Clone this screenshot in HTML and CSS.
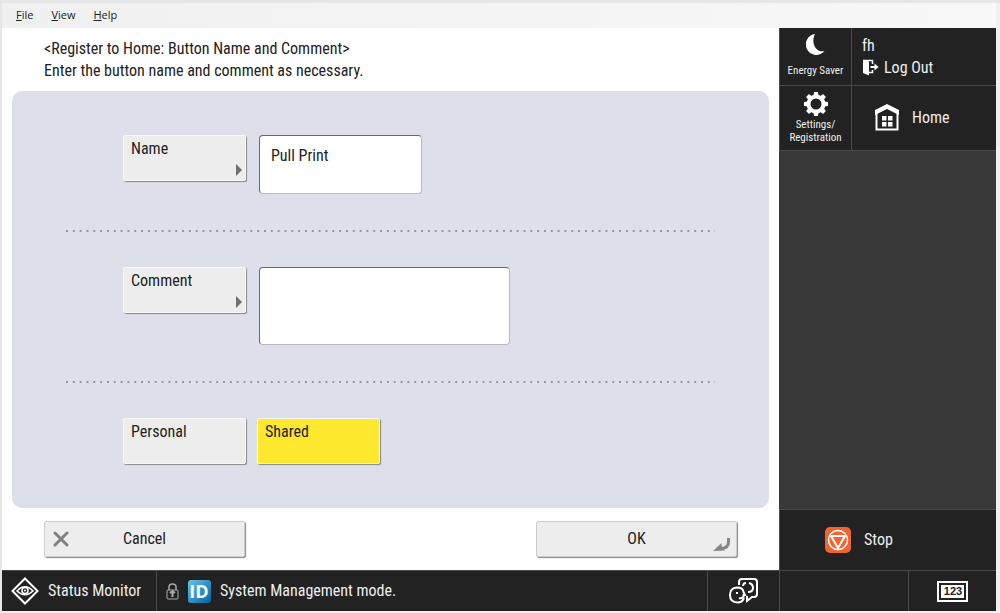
FILE: index.html
```html
<!DOCTYPE html>
<html lang="en">
  <head>
    <meta charset="UTF-8" />
    <meta name="viewport" content="width=device-width, initial-scale=1.0" />
    <title>Register to Home</title>
    <link rel="stylesheet" href="styles.css">
  </head>
  <body>
    <div class="window">
      <nav class="menu-bar">
        <button type="button" class="menu-item"><u>F</u>ile</button>
        <button type="button" class="menu-item"><u>V</u>iew</button>
        <button type="button" class="menu-item"><u>H</u>elp</button>
      </nav>

      <div class="screen">
        <main class="content">
          <header class="heading">
            <h1>&lt;Register to Home: Button Name and Comment&gt;</h1>
            <p>Enter the button name and comment as necessary.</p>
          </header>

          <section class="panel">
            <div class="row">
              <button type="button" class="key opens" id="nameKey">Name</button>
              <input type="text" class="field" aria-labelledby="nameKey" value="Pull Print" />
            </div>
            <div class="row">
              <button type="button" class="key opens" id="commentKey">Comment</button>
              <textarea class="field comment" aria-labelledby="commentKey"></textarea>
            </div>
            <div class="row share">
              <button type="button" class="key" aria-pressed="false">Personal</button>
              <button type="button" class="key selected" aria-pressed="true">Shared</button>
            </div>
          </section>

          <div class="actions">
            <button type="button" class="action">
              <svg class="cancel-icon" width="16" height="16" viewBox="0 0 16 16">
                <path d="M2 2L14 14M14 2L2 14" fill="none" stroke="#808080" stroke-width="3" stroke-linecap="round" />
              </svg>
              Cancel
            </button>
            <button type="button" class="action">
              OK
              <svg class="enter-icon" width="18" height="14" viewBox="0 0 18 14">
                <path d="M15.500 0v4q0 6-7 6.500" fill="none" stroke="#868686" stroke-width="3" />
                <path d="M0 13L8.500 5V8L12 12.500Z" fill="#868686" />
              </svg>
            </button>
          </div>
        </main>

        <aside class="sidebar">
          <div class="shortcuts">
            <button type="button" class="tile small">
              <svg width="20" height="22" viewBox="0 0 20 22">
                <path d="M9 0A10.500 10.500 0 1 0 18.500 17C10 19 4.500 9 9 0Z" fill="#fff" />
              </svg>
              Energy Saver
            </button>
            <div class="tile user">
              <span>fh</span>
              <button type="button" class="log-out">
                <svg width="17" height="17" viewBox="0 0 17 17">
                  <path d="M1 1L7 2.500V16.500L1 14Z" fill="#fff" />
                  <path d="M1 1.500H10.500V5M10.500 11V13.500H7" fill="none" stroke="#fff" stroke-width="1.500" />
                  <path d="M8.500 8H13" stroke="#fff" stroke-width="2" />
                  <path d="M12.500 4.500L16.500 8L12.500 11.500Z" fill="#fff" />
                </svg>
                Log Out
              </button>
            </div>
            <button type="button" class="tile small">
              <svg width="24" height="24" viewBox="-12 -12 24 24">
                <circle r="7.500" fill="none" stroke="#fff" stroke-width="4" />
                <g fill="#fff">
                  <path id="tooth" d="M-2.500-8L-2-12H2L2.500-8Z" />
                  <use href="#tooth" transform="rotate(45)" />
                  <use href="#tooth" transform="rotate(90)" />
                  <use href="#tooth" transform="rotate(135)" />
                  <use href="#tooth" transform="rotate(180)" />
                  <use href="#tooth" transform="rotate(225)" />
                  <use href="#tooth" transform="rotate(270)" />
                  <use href="#tooth" transform="rotate(315)" />
                </g>
              </svg>
              <span>Settings/<br />Registration</span>
            </button>
            <button type="button" class="tile home">
              <svg width="26" height="28" viewBox="0 0 26 28">
                <path d="M2.500 9V25.500H23.500V9" fill="none" stroke="#fff" stroke-width="2" />
                <path d="M1 11V6L13 0L25 6V11L13 5Z" fill="#fff" />
                <path d="M8 12h4.500v4.500H8zM14 12h4.500v4.500H14zM8 18h4.500v4.500H8zM14 18h4.500v4.500H14z" fill="#fff" />
              </svg>
              Home
            </button>
          </div>
          <button type="button" class="stop">
            <svg width="26" height="26" viewBox="0 0 26 26">
              <rect width="26" height="26" rx="5" fill="#f26430" />
              <circle cx="13" cy="13" r="9.500" fill="none" stroke="#fff" stroke-width="1.500" />
              <path d="M6 9H20L13 21Z" fill="none" stroke="#fff" stroke-width="2" stroke-linejoin="round" />
            </svg>
            Stop
          </button>
        </aside>
      </div>

      <footer class="status-bar">
        <button type="button" class="status-monitor">
          <svg width="28" height="28" viewBox="0 0 28 28" fill="none" stroke="#fff">
            <path d="M14 1.500L26.500 14L14 26.500L1.500 14Z" stroke-width="2" />
            <path d="M6 14Q14 5.500 22 14Q14 21.500 6 14Z" stroke-width="1.500" />
            <circle cx="14" cy="13.500" r="3" stroke-width="1.500" />
            <circle cx="14" cy="13.500" r="1" fill="#fff" stroke="none" />
          </svg>
          Status Monitor
        </button>
        <div class="message">
          <svg width="13" height="17" viewBox="0 0 13 17" fill="none" stroke="#aaa">
            <path d="M3 7V4Q3 1 6.500 1T10 4V7" stroke-width="1.500" />
            <rect x="1" y="7" width="11" height="9" rx="1" />
            <path d="M6.500 8.500V14M4 10L6.500 8L9 10" stroke-width="2" />
          </svg>
          <svg class="id-icon" width="23" height="23" viewBox="0 0 23 23">
            <defs>
              <linearGradient id="blue" x1="0" y1="0" x2="1" y2="1">
                <stop offset="0" stop-color="#68c4e4" />
                <stop offset="1" stop-color="#0460a4" />
              </linearGradient>
            </defs>
            <rect width="23" height="23" rx="3" fill="url(#blue)" />
            <text x="11" y="18" class="id-text">ID</text>
          </svg>
          <span>System Management mode.</span>
        </div>
        <button type="button" class="language" aria-label="Language">
          <svg width="30" height="26" viewBox="0 0 30 26" fill="none" stroke="#fff" stroke-width="2">
            <path d="M10 7V4Q10 1 13 1H25Q28 1 28 4V16Q28 19 25 19H23L18 23V18" />
            <path d="M1 17Q1 10 8 9.500Q14 9.500 14.500 14L16 17H14.500V21Q13 24.500 8.500 24.500Q1 24 1 17Z" />
            <path d="M14 8Q14 5 17 5M20 5Q24 6 24 10Q24 14 19 14" />
            <path d="M7 15H9M10 20Q12 21 14 19" />
          </svg>
        </button>
        <div class="side-status">
          <button type="button" class="keypad" aria-label="Number keys">
            <svg width="31" height="21" viewBox="0 0 31 21">
              <rect x="1" y="1" width="29" height="19" fill="none" stroke="#fff" stroke-width="2" />
              <rect x="4" y="4" width="23" height="13" fill="#fff" />
              <text x="16" y="14" class="keypad-text">123</text>
            </svg>
          </button>
        </div>
      </footer>
    </div>
  </body>
</html>
```
FILE: styles.css
```css
* {
  box-sizing: border-box;
}

body {
  margin: 0;
  background-color: #f0f0f0;
  color: #222;
  font-family: "Roboto Condensed", "Open Sans Condensed Light", sans-serif;
  font-size: 16px;
  line-height: 22px;
}

button,
input,
textarea {
  margin: 0;
  padding: 0;
  border: none;
  background: none;
  color: inherit;
  font: inherit;
}

button {
  cursor: pointer;
}

svg {
  display: block;
  flex: none;
}

.window {
  display: flex;
  flex-direction: column;
  min-height: 100vh;
  padding: 0 4px 2px 0;
  border-top: 3px solid #e6e6e6;
  border-left: 2px solid #e6e6e6;
}

/* Menu bar */
.menu-bar {
  display: flex;
  gap: 18px;
  height: 25px;
  padding: 0 14px 2px;
  background: linear-gradient(to right, #f0f0f0, #f8f8f8);
}

.menu-item {
  font-family: "Open Sans", sans-serif;
  font-size: 11px;
}

.screen {
  display: flex;
  flex: 1;
}

/* Main area */
.content {
  display: flex;
  flex: 1;
  flex-direction: column;
  padding: 10px 10px 13px;
  background-color: #fff;
}

.heading {
  padding: 0 32px;
  margin-bottom: 9px;
}

.heading h1,
.heading p {
  margin: 0;
  font-size: 16px;
  font-weight: normal;
}

.panel {
  flex: 1;
  padding: 44px 54px;
  border-radius: 10px;
  background-color: #dde0ea;
}

.row {
  display: flex;
  align-items: flex-start;
  gap: 13px;
  padding: 0 57px 38px;
  margin-bottom: 35px;
  background: linear-gradient(to right, #9296a8 2px, transparent 2px) left bottom / calc(100% / 95) 2px repeat-x;
}

.row.share {
  gap: 11px;
  padding-bottom: 0;
  margin-bottom: 0;
  background: none;
}

.key {
  position: relative;
  width: 123px;
  height: 46px;
  padding: 2px 7px;
  border: 1px solid #f8f8f8;
  border-radius: 2px;
  background-color: #ededed;
  box-shadow: 1px 1px 1px #888;
  display: flex;
}

.key.selected {
  background-color: #ffe92e;
}

.opens::after {
  content: "";
  position: absolute;
  right: 3px;
  bottom: 4px;
  border: 6px solid transparent;
  border-left-color: #707070;
  border-right-width: 0;
}

.field {
  width: 163px;
  height: 59px;
  padding: 0 11px 19px;
  border: 1px solid #b8bac2;
  border-top-color: #666973;
  border-left-color: #666973;
  border-radius: 4px;
  background-color: #fff;
}

.field.comment {
  width: 251px;
  height: 78px;
  resize: none;
}

.actions {
  display: flex;
  justify-content: space-between;
  padding: 13px 32px 0;
}

.action {
  position: relative;
  width: 201px;
  height: 36px;
  border: 1px solid #ccc;
  border-radius: 2px;
  background-color: #ededed;
  box-shadow: 1px 1px 1px #888;
}

.cancel-icon {
  position: absolute;
  top: 9px;
  left: 8px;
}

.enter-icon {
  position: absolute;
  right: 5px;
  bottom: 4px;
}

/* Right column */
.sidebar {
  display: flex;
  flex-direction: column;
  width: 217px;
  background-color: #383838;
  color: #eee;
}

.shortcuts {
  display: grid;
  grid-template-columns: 71px 1fr;
  grid-template-rows: 57px 64px;
  gap: 1px;
  padding-bottom: 1px;
  border-left: 1px solid #4a4a4a;
  background-color: #4a4a4a;
}

.tile {
  display: flex;
  background-color: #222;
}

.small {
  flex-direction: column;
  align-items: center;
  gap: 2px;
  padding-top: 6px;
  font-size: 11px;
  line-height: 13px;
}

.small:first-child {
  gap: 8px;
}

.user {
  flex-direction: column;
  justify-content: center;
  padding-left: 10px;
}

.log-out {
  display: flex;
  align-items: center;
  gap: 5px;
}

.home {
  align-items: center;
  gap: 12px;
  padding-left: 22px;
}

.stop {
  display: flex;
  align-items: center;
  gap: 13px;
  height: 61px;
  margin-top: auto;
  padding-left: 45px;
  border-top: 1px solid #4a4a4a;
  border-left: 1px solid #4a4a4a;
  background-color: #222;
}

/* Bottom bar */
.status-bar {
  display: flex;
  height: 41px;
  border-top: 1px solid #4a4a4a;
  background-color: #222;
  color: #eee;
}

.status-monitor {
  display: flex;
  align-items: center;
  gap: 9px;
  width: 154px;
  padding-left: 9px;
  white-space: nowrap;
}

.message {
  display: flex;
  flex: 1;
  align-items: center;
  gap: 9px;
  padding-left: 9px;
  border-left: 1px solid #4a4a4a;
}

.id-text {
  fill: #fff;
  font-family: "Open Sans", sans-serif;
  font-size: 18px;
  font-weight: bold;
  text-anchor: middle;
}

.language {
  display: flex;
  align-items: center;
  justify-content: center;
  width: 72px;
  border-left: 1px solid #4a4a4a;
}

.side-status {
  display: flex;
  justify-content: flex-end;
  width: 217px;
  border-left: 1px solid #4a4a4a;
}

.keypad {
  display: flex;
  align-items: center;
  justify-content: center;
  width: 88px;
  border-left: 1px solid #4a4a4a;
}

.keypad-text {
  fill: #222;
  font-family: "Liberation Sans", sans-serif;
  font-size: 11px;
  font-weight: bold;
  text-anchor: middle;
}
```
